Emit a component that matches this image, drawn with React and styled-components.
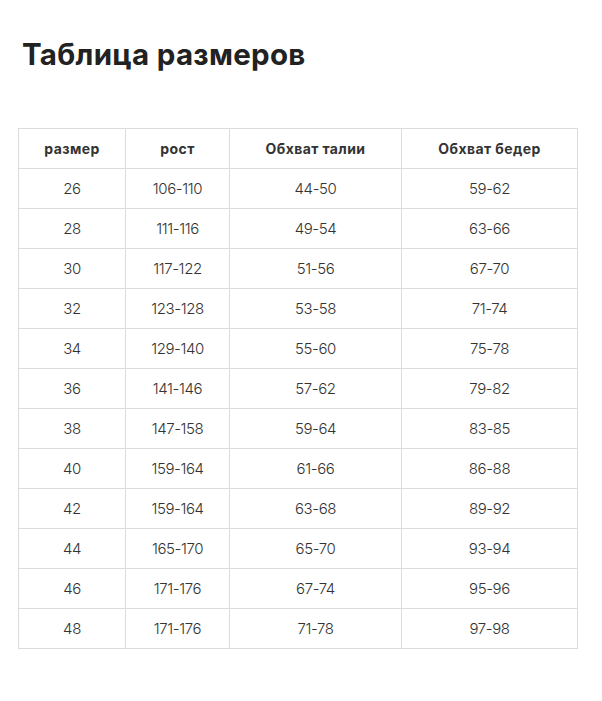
import React from "react";
import styled, { createGlobalStyle } from "styled-components";

const GlobalStyle = createGlobalStyle`
  body {
    margin: 0;
    background: #fff;
    font-family: "Inter", "Noto Sans", sans-serif;
    color: #333;
  }
`;

const rows = [
    ["26", "106-110", "44-50", "59-62"],
    ["28", "111-116", "49-54", "63-66"],
    ["30", "117-122", "51-56", "67-70"],
    ["32", "123-128", "53-58", "71-74"],
    ["34", "129-140", "55-60", "75-78"],
    ["36", "141-146", "57-62", "79-82"],
    ["38", "147-158", "59-64", "83-85"],
    ["40", "159-164", "61-66", "86-88"],
    ["42", "159-164", "63-68", "89-92"],
    ["44", "165-170", "65-70", "93-94"],
    ["46", "171-176", "67-74", "95-96"],
    ["48", "171-176", "71-78", "97-98"],
];

const widths = [107, 104, 172, 176];

export default function App() {
    return (
        <Page>
            <GlobalStyle />
            <Title>Таблица размеров</Title>
            <SizeTable>
                <colgroup>
                    {widths.map((w, i) => (
                        <col key={i} style={{ width: w }} />
                    ))}
                </colgroup>
                <thead>
                    <tr>
                        <HeadCell>размер</HeadCell>
                        <HeadCell>рост</HeadCell>
                        <HeadCell>Обхват талии</HeadCell>
                        <HeadCell>Обхват бедер</HeadCell>
                    </tr>
                </thead>
                <tbody>
                    {rows.map((row) => (
                        <tr key={row[0]}>
                            {row.map((v, i) => (
                                <Cell key={i}>{v}</Cell>
                            ))}
                        </tr>
                    ))}
                </tbody>
            </SizeTable>
        </Page>
    );
}

const Page = styled.div`
  padding: 36px 0 40px 18px;
`;

const Title = styled.h1`
  margin: 0 0 56px 4px;
  font-size: 29.5px;
  line-height: 36px;
  font-weight: 700;
  color: #222;
  letter-spacing: 0.3px;
`;

const SizeTable = styled.table`
  border-collapse: collapse;
  table-layout: fixed;
  width: 560px;
`;

const HeadCell = styled.th`
  height: 39px;
  padding: 0;
  border: 1px solid #dcdcdc;
  font-size: 14px;
  font-weight: 700;
  letter-spacing: 0.4px;
  color: #333;
  text-align: center;
`;

const Cell = styled.td`
  height: 39px;
  padding: 0;
  border: 1px solid #dcdcdc;
  font-size: 15px;
  font-weight: 300;
  letter-spacing: -0.4px;
  color: #333;
  text-align: center;
`;
